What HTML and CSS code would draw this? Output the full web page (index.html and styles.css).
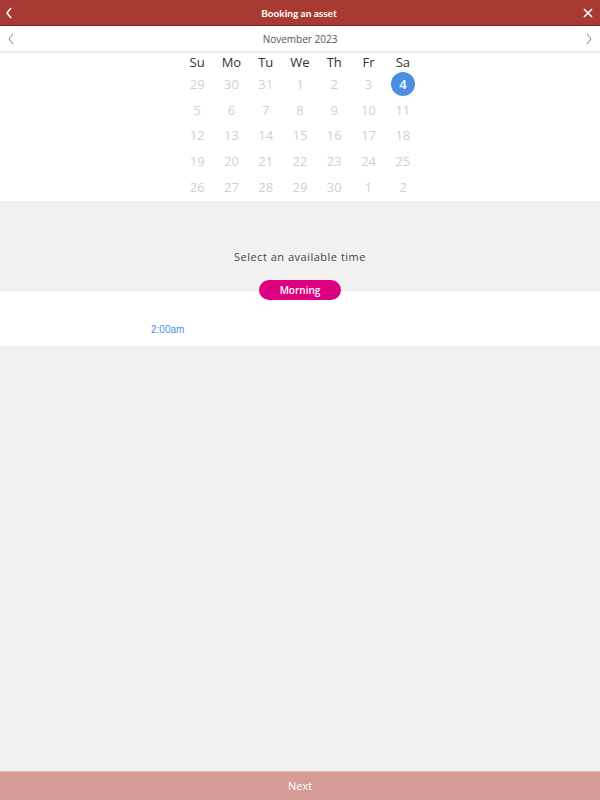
FILE: index.html
```html
<!DOCTYPE html>
<html lang="en">
<head>
    <meta charset="UTF-8">
    <meta name="viewport" content="width=device-width, initial-scale=1.0">
    <title>Booking an asset</title>
    <link rel="stylesheet" href="styles.css">
</head>
<body>

    <div class="header">
        <span class="back">
            <svg width="8" height="12" viewBox="0 0 8 12"><path d="M6 1 L2 6 L6 11" fill="none" stroke="#fff" stroke-width="1.6"/></svg>
        </span>
        <span class="title">Booking an asset</span>
        <span class="close">
            <svg width="10" height="10" viewBox="0 0 10 10"><path d="M1 1 L9 9 M9 1 L1 9" fill="none" stroke="#fff" stroke-width="1.6"/></svg>
        </span>
    </div>

    <div class="month">
        <span class="arrow">
            <svg width="8" height="12" viewBox="0 0 8 12"><path d="M6 1 L2 6 L6 11" fill="none" stroke="#7a8588" stroke-width="1"/></svg>
        </span>
        <span class="month-name">November 2023</span>
        <span class="arrow">
            <svg width="8" height="12" viewBox="0 0 8 12"><path d="M2 1 L6 6 L2 11" fill="none" stroke="#7a8588" stroke-width="1"/></svg>
        </span>
    </div>

    <div class="calendar">
        <div class="grid">
            <div class="wd">Su</div><div class="wd">Mo</div><div class="wd">Tu</div><div class="wd">We</div><div class="wd">Th</div><div class="wd">Fr</div><div class="wd">Sa</div>

            <div class="day">29</div><div class="day">30</div><div class="day">31</div><div class="day">1</div><div class="day">2</div><div class="day">3</div><div class="day"><span class="selected">4</span></div>
            <div class="day">5</div><div class="day">6</div><div class="day">7</div><div class="day">8</div><div class="day">9</div><div class="day">10</div><div class="day">11</div>
            <div class="day">12</div><div class="day">13</div><div class="day">14</div><div class="day">15</div><div class="day">16</div><div class="day">17</div><div class="day">18</div>
            <div class="day">19</div><div class="day">20</div><div class="day">21</div><div class="day">22</div><div class="day">23</div><div class="day">24</div><div class="day">25</div>
            <div class="day">26</div><div class="day">27</div><div class="day">28</div><div class="day">29</div><div class="day">30</div><div class="day">1</div><div class="day">2</div>
        </div>
    </div>

    <div class="main">
        <div class="pick">Select an available time</div>
        <div class="slots">
            <div class="pill">Morning</div>
            <div class="times">
                <span class="time">2:00am</span>
            </div>
        </div>
    </div>

    <div class="footer">Next</div>

</body>
</html>
```

FILE: styles.css
```css
*{
    margin: 0;
    padding: 0;
    box-sizing: border-box;
}
body{
    width: 600px;
    height: 800px;
    display: flex;
    flex-direction: column;
    background: #f1f1f1;
    font-family: "Open Sans", "Liberation Sans", sans-serif;
}
.header{
    height: 26px;
    background: #a83a34;
    border-bottom: 1px solid #861c1c;
    display: flex;
    align-items: center;
    justify-content: space-between;
    padding: 0 7px 0 5px;
}
.header .title{
    font-family: Lato, "Open Sans", sans-serif;
    font-weight: bold;
    font-size: 10px;
    color: #fff;
}
.header .back,
.header .close{
    display: flex;
    width: 10px;
}
.month{
    height: 27px;
    background: #fff;
    border-bottom: 2px solid #e9eeed;
    display: flex;
    align-items: center;
    justify-content: space-between;
    padding: 0 7px;
}
.month .arrow{
    display: flex;
}
.month-name{
    font-size: 10px;
    color: #555;
}
.calendar{
    background: #fff;
    height: 148px;
    display: flex;
    justify-content: center;
}
.grid{
    width: 240px;
    display: grid;
    grid-template-columns: repeat(7, 1fr);
    grid-template-rows: 18px repeat(5, 25.75px);
}
.wd{
    font-size: 13px;
    color: #333;
    display: flex;
    align-items: center;
    justify-content: center;
}
.day{
    font-size: 13px;
    color: #d0d0d0;
    display: flex;
    align-items: center;
    justify-content: center;
}
.selected{
    width: 24px;
    height: 24px;
    border-radius: 50%;
    background: #4a8fe2;
    color: #fff;
    font-weight: 600;
    display: flex;
    align-items: center;
    justify-content: center;
}
.main{
    flex: 1;
}
.pick{
    height: 89px;
    padding-top: 48px;
    text-align: center;
    font-size: 11px;
    letter-spacing: 0.5px;
    color: #444;
}
.slots{
    background: #fff;
    border-top: 1px solid #e8ecec;
    height: 56px;
}
.pill{
    width: 82px;
    height: 20px;
    margin: -11px auto 0;
    border-radius: 10px;
    background: #dc0080;
    color: #fff;
    font-size: 10px;
    font-weight: 600;
    display: flex;
    align-items: center;
    justify-content: center;
}
.times{
    padding: 16px 0 0 151px;
}
.time{
    font-family: "Liberation Sans", Arial, sans-serif;
    font-size: 10px;
    color: #4a90e2;
}
.footer{
    height: 29px;
    background: #d49b97;
    border-top: 1px solid #dcbab7;
    display: flex;
    align-items: center;
    justify-content: center;
    padding-bottom: 2px;
    font-size: 11px;
    color: #fff;
}
```
